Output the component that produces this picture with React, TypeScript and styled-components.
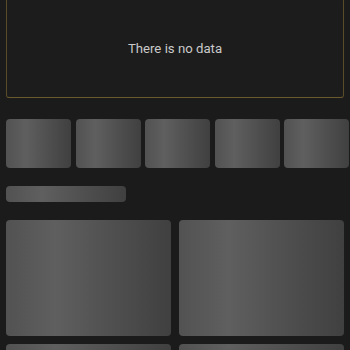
import styled, { createGlobalStyle } from 'styled-components';

const GlobalStyle = createGlobalStyle`
  html, body {
    margin: 0;
    padding: 0;
    background: #1b1b1b;
    overflow: hidden;
  }
  body {
    font-family: Roboto, "Liberation Sans", sans-serif;
  }
`;

const shimmer = `linear-gradient(90deg, #525252 0%, #5f5f5f 30%, #4f4f4f 65%, #404040 100%)`;

const Page = styled.div`
  width: 350px;
  height: 350px;
  overflow: hidden;
  padding: 0 6px;
  box-sizing: border-box;
  display: flex;
  flex-direction: column;

  & > * {
    flex-shrink: 0;
  }
`;

const EmptyCard = styled.div`
  margin-top: -2px;
  height: 100px;
  box-sizing: border-box;
  border: 1px solid #5a4c28;
  border-bottom-color: #6b5a2c;
  border-radius: 3px;
  background: #1c1c1c;
  display: flex;
  align-items: center;
  justify-content: center;
  color: #cacaca;
  font-size: 13.2px;
`;

const TileRow = styled.div`
  margin-top: 21px;
  display: flex;
  gap: 4.5px;
  width: 344px;
`;

const Tile = styled.div`
  flex: 0 0 65px;
  height: 49px;
  border-radius: 4px;
  background: ${shimmer};
`;

const TitleBar = styled.div`
  margin-top: 18px;
  width: 120px;
  height: 16px;
  border-radius: 4px;
  background: ${shimmer};
`;

const CardGrid = styled.div`
  margin-top: 18px;
  display: grid;
  grid-template-columns: 1fr 1fr;
  gap: 8px;
`;

const Card = styled.div`
  height: 116px;
  border-radius: 4px;
  background: ${shimmer};
`;

const App = () => {
  return (
    <>
      <GlobalStyle />
      <Page>
        <EmptyCard>There is no data</EmptyCard>
        <TileRow>
          {[0, 1, 2, 3, 4].map((i) => (
            <Tile key={i} />
          ))}
        </TileRow>
        <TitleBar />
        <CardGrid>
          {[0, 1, 2, 3].map((i) => (
            <Card key={i} />
          ))}
        </CardGrid>
      </Page>
    </>
  );
};

export default App;
